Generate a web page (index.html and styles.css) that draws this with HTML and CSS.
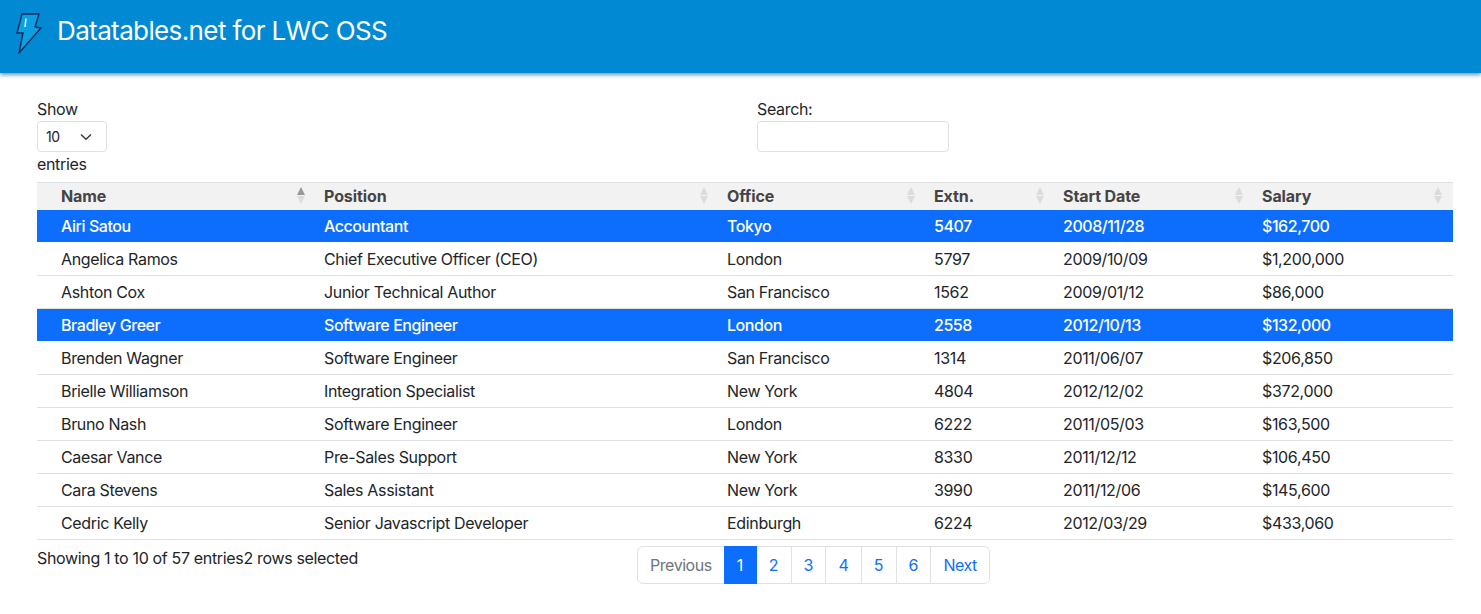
FILE: index.html
```html
<!DOCTYPE html>
<html>
<head>
<title>Datatables.net for LWC OSS</title>
<meta name="viewport" content="width=device-width, initial-scale=1.0">
<link rel="stylesheet" href="styles.css">
</head>
<body>

<header class="topbar">
  <svg class="logo" width="32" height="46" viewBox="0 0 32 46">
    <path d="M9 6H26L22 19L28 20L6 45L10 25L4 25Z" fill="#0ba0e2" stroke="#06285c" stroke-width="1.400" stroke-linejoin="miter"/>
    <path d="M13 10.500L12 19" stroke="#eaf7fd" stroke-width="1.500" fill="none"/>
  </svg>
  <h1>Datatables.net for LWC OSS</h1>
</header>

<main class="content">
  <section class="controls">
    <div class="length">
      <label for="length">Show</label>
      <div class="select-box" id="length">
        <span>10</span>
        <svg width="12" height="8" viewBox="0 0 12 8"><path d="M1 1.500L6 6.300L11 1.500" fill="none" stroke="#343a40" stroke-width="1.400"/></svg>
      </div>
      <div>entries</div>
    </div>
    <div class="search">
      <label for="search">Search:</label>
      <input type="text" id="search">
    </div>
  </section>

  <table class="grid">
    <colgroup>
      <col class="c-name"><col class="c-pos"><col class="c-office"><col class="c-extn"><col class="c-date"><col class="c-salary">
    </colgroup>
    <thead>
      <tr>
        <th class="sorted">Name</th>
        <th>Position</th>
        <th>Office</th>
        <th>Extn.</th>
        <th>Start Date</th>
        <th>Salary</th>
      </tr>
    </thead>
    <tbody>
      <tr class="selected"><td>Airi Satou</td><td>Accountant</td><td>Tokyo</td><td>5407</td><td>2008/11/28</td><td>$162,700</td></tr>
      <tr><td>Angelica Ramos</td><td>Chief Executive Officer (CEO)</td><td>London</td><td>5797</td><td>2009/10/09</td><td>$1,200,000</td></tr>
      <tr><td>Ashton Cox</td><td>Junior Technical Author</td><td>San Francisco</td><td>1562</td><td>2009/01/12</td><td>$86,000</td></tr>
      <tr class="selected"><td>Bradley Greer</td><td>Software Engineer</td><td>London</td><td>2558</td><td>2012/10/13</td><td>$132,000</td></tr>
      <tr><td>Brenden Wagner</td><td>Software Engineer</td><td>San Francisco</td><td>1314</td><td>2011/06/07</td><td>$206,850</td></tr>
      <tr><td>Brielle Williamson</td><td>Integration Specialist</td><td>New York</td><td>4804</td><td>2012/12/02</td><td>$372,000</td></tr>
      <tr><td>Bruno Nash</td><td>Software Engineer</td><td>London</td><td>6222</td><td>2011/05/03</td><td>$163,500</td></tr>
      <tr><td>Caesar Vance</td><td>Pre-Sales Support</td><td>New York</td><td>8330</td><td>2011/12/12</td><td>$106,450</td></tr>
      <tr><td>Cara Stevens</td><td>Sales Assistant</td><td>New York</td><td>3990</td><td>2011/12/06</td><td>$145,600</td></tr>
      <tr><td>Cedric Kelly</td><td>Senior Javascript Developer</td><td>Edinburgh</td><td>6224</td><td>2012/03/29</td><td>$433,060</td></tr>
    </tbody>
  </table>

  <section class="footer">
    <div class="info">Showing 1 to 10 of 57 entries2 rows selected</div>
    <ul class="pager">
      <li class="off">Previous</li>
      <li class="active">1</li>
      <li>2</li>
      <li>3</li>
      <li>4</li>
      <li>5</li>
      <li>6</li>
      <li>Next</li>
    </ul>
  </section>
</main>

</body>
</html>
```

FILE: styles.css
```css
* {
   box-sizing: border-box;}

body {
   background-color: #fff;
   color: #212529;
   font-family: 'Inter', 'Liberation Sans', sans-serif;
   font-size: 16px;
   letter-spacing: -.34px;
   line-height: 1.5;
   margin: 0;}

.topbar {
   align-items: center;
   background-color: #0189d4;
   box-shadow: 0 2px 4px rgba(3, 60, 120, .55);
   display: flex;
   height: 73px;
   padding: 0 0 11px 13px;}

.logo {
   flex: none;
   margin-right: 12px;}

.topbar h1 {
   color: #fff;
   font-size: 26px;
   font-weight: 400;
   letter-spacing: -.62px;
   line-height: 1.2;
   margin: 0;}

.content {
   padding: 24px 28px 0 37px;}

.controls {
   display: grid;
   grid-template-columns: 720px 1fr;}

.controls label {
   display: block;}

.select-box {
   align-items: center;
   border: 1px solid #dee2e6;
   border-radius: 4px;
   display: flex;
   font-size: 14px;
   height: 31px;
   justify-content: space-between;
   padding: 0 14px 0 8px;
   width: 70px;}

.search input {
   border: 1px solid #dee2e6;
   border-radius: 4px;
   display: block;
   height: 31px;
   width: 192px;}

.grid {
   border-collapse: collapse;
   margin-top: 6px;
   table-layout: fixed;
   width: 1416px;}

.c-name {width:279px;}
.c-pos {width:403px;}
.c-office {width:207px;}
.c-extn {width:129px;}
.c-date {width:199px;}
.c-salary {width:199px;}

.grid th {
   background-color: #f2f2f2;
   border-top: 1px solid #dee2e6;
   color: #444;
   font-weight: 700;
   height: 27px;
   letter-spacing: -.1px;
   line-height: 24px;
   padding: 0 8px;
   position: relative;
   text-align: left;}

.grid th:first-child, .grid td:first-child {
   padding-left: 24px;}

.grid th:before, .grid th:after {
   border-left: 4px solid transparent;
   border-right: 4px solid transparent;
   content: '';
   position: absolute;
   right: 11px;}

.grid th:before {
   border-bottom: 8px solid #dcdcdc;
   top: 4px;}

.grid th:after {
   border-top: 8px solid #dcdcdc;
   top: 13px;}

.grid th.sorted:before {
   border-bottom-color: #999;}

.grid td {
   border-bottom: 1px solid #dee2e6;
   height: 33px;
   line-height: 24px;
   padding: 4px 8px;}

.grid .selected td {
   background-color: #0d6efd;
   background-clip: padding-box;
   border-bottom-color: #fff;
   color: #fff;
   font-weight: 500;
   letter-spacing: -.44px;}

.footer {
   display: grid;
   grid-template-columns: 600px 1fr;}

.info {
   padding-top: 6px;}

.pager {
   display: flex;
   letter-spacing: 0;
   list-style: none;
   margin: 6px 0 0;
   padding: 0;}

.pager li {
   background-color: #fff;
   border: 1px solid #dee2e6;
   color: #0d6efd;
   height: 38px;
   margin-left: -1px;
   padding: 6px 12px;}

.pager li:first-child {
   border-radius: 6px 0 0 6px;
   letter-spacing: -.45px;
   margin-left: 0;}

.pager li:last-child {
   border-radius: 0 6px 6px 0;
   letter-spacing: -.5px;}

.pager .off {
   color: #6c757d;}

.pager .active {
   background-color: #0d6efd;
   border-color: #0d6efd;
   color: #fff;
   min-width: 33px;
   position: relative;}
```
